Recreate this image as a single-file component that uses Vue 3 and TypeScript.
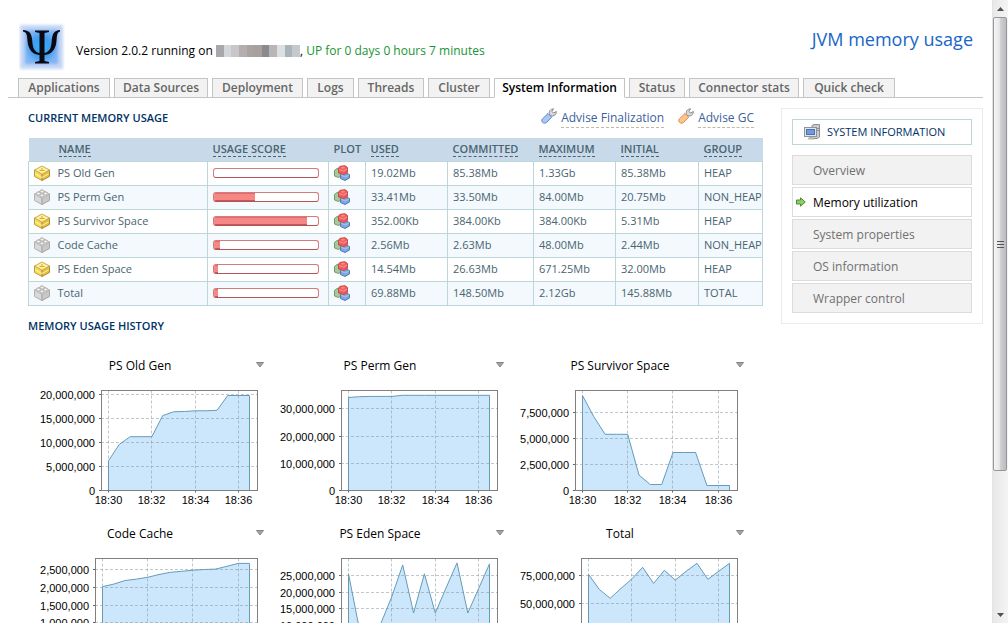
<script setup lang="ts">
interface Pool {
  name: string
  gold: boolean
  score: number
  used: string
  committed: string
  maximum: string
  initial: string
  group: string
}

interface Chart {
  title: string
  left: number
  unit: number
  unitHeight: number
  ticks: number[]
  values: number[]
}

const tabs = [
  'Applications',
  'Data Sources',
  'Deployment',
  'Logs',
  'Threads',
  'Cluster',
  'System Information',
  'Status',
  'Connector stats',
  'Quick check',
]
const activeTab = 'System Information'

const menu = ['Overview', 'Memory utilization', 'System properties', 'OS information', 'Wrapper control']
const activeItem = 'Memory utilization'

const mosaic = ['#a9a7aa', '#d3d7db', '#c8c6c8', '#b5aeae', '#aaa4a0', '#a7a09d', '#8b8a8c', '#b9b5b6', '#dddfe2', '#aab4bb', '#c5c8cc']

const columns = ['Used', 'Committed', 'Maximum', 'Initial', 'Group']

const pools: Pool[] = [
  { name: 'PS Old Gen', gold: true, score: 0, used: '19.02Mb', committed: '85.38Mb', maximum: '1.33Gb', initial: '85.38Mb', group: 'HEAP' },
  { name: 'PS Perm Gen', gold: false, score: 39, used: '33.41Mb', committed: '33.50Mb', maximum: '84.00Mb', initial: '20.75Mb', group: 'NON_HEAP' },
  { name: 'PS Survivor Space', gold: true, score: 89, used: '352.00Kb', committed: '384.00Kb', maximum: '384.00Kb', initial: '5.31Mb', group: 'HEAP' },
  { name: 'Code Cache', gold: false, score: 6, used: '2.56Mb', committed: '2.63Mb', maximum: '48.00Mb', initial: '2.44Mb', group: 'NON_HEAP' },
  { name: 'PS Eden Space', gold: true, score: 4, used: '14.54Mb', committed: '26.63Mb', maximum: '671.25Mb', initial: '32.00Mb', group: 'HEAP' },
  { name: 'Total', gold: false, score: 4, used: '69.88Mb', committed: '148.50Mb', maximum: '2.12Gb', initial: '145.88Mb', group: 'TOTAL' },
]

// Values are in millions of bytes, one sample every 30 seconds.
const charts: Chart[] = [
  { title: 'PS Old Gen', left: 73, unit: 5, unitHeight: 24, ticks: [0, 5, 10, 15, 20], values: [6.2, 9.6, 11.2, 11.2, 11.2, 15.6, 16.4, 16.45, 16.6, 16.6, 16.7, 19.8, 19.8, 19.8] },
  { title: 'PS Perm Gen', left: 73, unit: 10, unitHeight: 27.2, ticks: [0, 10, 20, 30], values: [34.2, 34.5, 34.6, 34.6, 34.6, 35, 35, 35, 35, 35, 35, 35, 35, 35] },
  { title: 'PS Survivor Space', left: 67, unit: 2.5, unitHeight: 26, ticks: [0, 2.5, 5, 7.5], values: [9.13, 7.1, 5.4, 5.4, 5.4, 1.48, 0.58, 0.58, 3.65, 3.65, 3.65, 0.48, 0.48, 0.48] },
  { title: 'Code Cache', left: 67, unit: 0.5, unitHeight: 17.8, ticks: [0, 0.5, 1, 1.5, 2, 2.5], values: [2.02, 2.09, 2.19, 2.23, 2.28, 2.36, 2.42, 2.45, 2.48, 2.5, 2.51, 2.59, 2.67, 2.67] },
  { title: 'PS Eden Space', left: 73, unit: 5, unitHeight: 16.6, ticks: [0, 5, 10, 15, 20, 25], values: [25.5, 9, 2.5, 10.7, 18.7, 28.2, 13.7, 25.5, 13.7, 21.3, 28.8, 13.7, 21.1, 28.5] },
  { title: 'Total', left: 73, unit: 25, unitHeight: 27.7, ticks: [0, 25, 50, 75], values: [76, 62.4, 54.3, 63.3, 71.8, 82.3, 67.8, 79.6, 70.8, 78.7, 85.9, 71.5, 78.7, 85.9] },
]

const plotTop = 6.5
const plotBottom = 106.5
const plotRight = 229.5
const lastX = 221.5

function xOf(c: Chart, i: number): number {
  const first = c.left + 7.5
  return first + ((lastX - first) * i) / 13
}

function snapX(c: Chart, i: number): number {
  return Math.floor(xOf(c, i)) + 0.5
}

function yOf(c: Chart, v: number): number {
  return plotBottom - (v / c.unit) * c.unitHeight
}

function snapY(c: Chart, v: number): number {
  return Math.floor(yOf(c, v)) + 0.5
}

function area(c: Chart): string {
  const points = c.values.map((v, i) => `${xOf(c, i).toFixed(1)},${yOf(c, v).toFixed(1)}`).join(' L')
  return `M${xOf(c, 0)},${plotBottom} L${points} L${lastX},${plotBottom} Z`
}

function label(v: number): string {
  return Math.round(v * 1000000).toLocaleString('en-US')
}

const times = [
  { index: 0, text: '18:30' },
  { index: 4, text: '18:32' },
  { index: 8, text: '18:34' },
  { index: 12, text: '18:36' },
]
</script>

<template>
  <div class="window">
    <div class="page">
      <header class="masthead">
        <a class="logo" href="#" aria-label="Home">
          <svg width="46" height="48" viewBox="0 0 46 48" aria-hidden="true">
            <defs>
              <radialGradient id="logoGlow">
                <stop offset="0" stop-color="#2fb4ff" />
                <stop offset="0.6" stop-color="#3f9df2" />
                <stop offset="1" stop-color="#7fb4f4" />
              </radialGradient>
              <filter id="logoSoft" x="-20%" y="-20%" width="140%" height="140%">
                <feGaussianBlur stdDeviation="1.5" />
              </filter>
            </defs>
            <rect x="1" y="2" width="43" height="44" fill="#c3d6f6" filter="url(#logoSoft)" />
            <rect x="6" y="7" width="33" height="34" fill="url(#logoGlow)" filter="url(#logoSoft)" />
            <path
              d="M16 7.500H30V9L25.500 10V30C31 29 32.300 24 32.700 18 33.200 11 35 7.500 41 7V8.500C38 9.500 38 12 37.500 18 36.800 26 33 31.500 25.500 32V38L30 39V40.500H16V39L20.500 38V32C13 31.500 9.200 26 8.500 18 8 12 8 9.500 4 8.500V7C11 7.500 12.800 11 13.300 18 13.700 24 15 29 20.500 30V10L16 9Z"
              fill="#0a0a10"
            />
          </svg>
        </a>
        <p class="version">
          Version 2.0.2 running on
          <span class="mosaic" aria-hidden="true"><i v-for="(c, i) in mosaic" :key="i" :style="{ background: c }"></i></span>,
          <span class="up">UP for 0 days 0 hours 7 minutes</span>
        </p>
        <h1>JVM memory usage</h1>
      </header>

      <nav class="tabs" aria-label="Main">
        <a v-for="t in tabs" :key="t" href="#" :class="{ active: t === activeTab }">{{ t }}</a>
      </nav>

      <div class="body">
        <main class="content">
          <div class="section-head">
            <h2>Current memory usage</h2>
            <div class="actions">
              <a href="#" class="action">
                <svg width="16" height="16" viewBox="0 0 16 16" aria-hidden="true">
                  <path d="M8.500 6.500C7.500 3.500 9.500 1 12.500.8L11 3.500 12.500 5 15.300 3.500C15.600 6.500 13 8.500 10 7.800Z" fill="#d8dade" stroke="#85888f" />
                  <path d="M7 5.500 10.700 9.200 5.500 14.500C2.500 16.500-.5 13.500 1.300 11Z" fill="#a9c8f2" stroke="#6487c5" />
                </svg>
                <span>Advise Finalization</span>
              </a>
              <a href="#" class="action">
                <svg width="16" height="16" viewBox="0 0 16 16" aria-hidden="true">
                  <path d="M8.500 6.500C7.500 3.500 9.500 1 12.500.8L11 3.500 12.500 5 15.300 3.500C15.600 6.500 13 8.500 10 7.800Z" fill="#d8dade" stroke="#85888f" />
                  <path d="M7 5.500 10.700 9.200 5.500 14.500C2.500 16.500-.5 13.500 1.300 11Z" fill="#ffc38c" stroke="#d98a4e" />
                </svg>
                <span>Advise GC</span>
              </a>
            </div>
          </div>

          <table class="usage">
            <colgroup>
              <col class="c-icon" /><col class="c-name" /><col class="c-score" /><col class="c-plot" /><col class="c-used" />
              <col class="c-mid" /><col class="c-max" /><col class="c-init" /><col class="c-group" />
            </colgroup>
            <thead>
              <tr>
                <th></th>
                <th><a href="#">Name</a></th>
                <th><a href="#">Usage score</a></th>
                <th>Plot</th>
                <th v-for="c in columns" :key="c"><a href="#">{{ c }}</a></th>
              </tr>
            </thead>
            <tbody>
              <tr v-for="p in pools" :key="p.name">
                <td class="icon-cell">
                  <svg class="brick" :class="{ gold: p.gold }" width="16" height="16" viewBox="0 0 16 16" aria-hidden="true">
                    <path class="left" d="M.5 5 8 9V15.500L.5 11.500Z" />
                    <path class="right" d="M15.500 5 8 9V15.500L15.500 11.500Z" />
                    <path class="top" d="M.5 5 8 1 15.500 5 8 9.200Z" />
                    <g v-if="p.gold" class="bolt">
                      <path d="M5.500 5.500H10.500M8 3V5.500" />
                      <path class="shine" d="M1.500 9 8 12.500 14.500 9" />
                    </g>
                    <g v-else class="studs">
                      <ellipse cx="8" cy="2.500" rx="2" ry="1.600" />
                      <ellipse cx="4.500" cy="4.500" rx="2" ry="1.600" />
                      <ellipse cx="11.500" cy="4.500" rx="2" ry="1.600" />
                      <ellipse cx="8" cy="6.500" rx="2" ry="1.600" />
                    </g>
                  </svg>
                </td>
                <td class="name-cell">{{ p.name }}</td>
                <td class="score-cell">
                  <div class="score" role="meter" aria-valuemin="0" aria-valuemax="100" :aria-valuenow="p.score" :aria-label="p.name">
                    <div v-if="p.score" class="score-fill" :style="{ width: p.score + '%' }"></div>
                  </div>
                </td>
                <td>
                  <a href="#" :aria-label="'Plot ' + p.name">
                    <svg width="16" height="16" viewBox="0 0 16 16" aria-hidden="true">
                      <path d="M.5 5.500 3 3.500 7 5V11L4.500 12.500.5 11Z" fill="#a4c99c" stroke="#6a9c68" />
                      <path d="M6.500 9.500 11 7.500 15.500 9.500V13L11 15.500 6.500 13.500Z" fill="#7fa6d8" stroke="#4f7ab5" />
                      <path d="M7 10 11 12 15 10" fill="none" stroke="#a8c6e8" />
                      <path d="M4.500 3 6 1.300 11 .7 13.500 2.500V7.500L10 9.500 4.500 8Z" fill="#ee5c5c" stroke="#cc4a4e" />
                      <path d="M5 4.500 9.500 6 13 4" fill="none" stroke="#ff9a94" />
                      <ellipse cx="9" cy="2.800" rx="2" ry="1" fill="#ff8a84" />
                    </svg>
                  </a>
                </td>
                <td>{{ p.used }}</td>
                <td>{{ p.committed }}</td>
                <td>{{ p.maximum }}</td>
                <td>{{ p.initial }}</td>
                <td>{{ p.group }}</td>
              </tr>
            </tbody>
          </table>

          <h2 class="history-title">Memory usage history</h2>

          <div class="charts">
            <section v-for="c in charts" :key="c.title" class="chart">
              <div class="chart-head">
                <h3>{{ c.title }}</h3>
                <button type="button" :aria-label="c.title + ' options'">
                  <svg width="8" height="6" viewBox="0 0 8 6" aria-hidden="true"><path d="M.5.5H7.500L4 5Z" fill="#a4a4a4" stroke="#858585" /></svg>
                </button>
              </div>
              <svg class="plot" width="240" height="124" viewBox="0 0 240 124" role="img" :aria-label="c.title">
                <path class="area" :d="area(c)" />
                <g class="grid">
                  <line v-for="t in times" :key="t.text" :x1="snapX(c, t.index)" :x2="snapX(c, t.index)" :y1="plotTop" :y2="plotBottom" />
                  <line v-for="v in c.ticks.slice(1)" :key="v" :x1="c.left" :x2="plotRight" :y1="snapY(c, v)" :y2="snapY(c, v)" />
                </g>
                <rect class="frame" :x="c.left + 0.5" :y="plotTop" :width="plotRight - c.left - 0.5" :height="plotBottom - plotTop" />
                <g class="marks">
                  <line v-for="t in times" :key="t.text" :x1="snapX(c, t.index)" :x2="snapX(c, t.index)" :y1="plotBottom" :y2="plotBottom + 2" />
                  <line v-for="v in c.ticks" :key="v" :x1="c.left - 2" :x2="c.left" :y1="snapY(c, v)" :y2="snapY(c, v)" />
                </g>
                <text v-for="v in c.ticks" :key="v" class="y-label" :x="c.left - 6" :y="snapY(c, v) + 4">{{ label(v) }}</text>
                <text v-for="t in times" :key="t.text" class="x-label" :x="snapX(c, t.index)" y="120">{{ t.text }}</text>
              </svg>
            </section>
          </div>
        </main>

        <aside class="side">
          <h2 class="side-title">
            <svg width="16" height="16" viewBox="0 0 16 16" aria-hidden="true">
              <path d="M8 1.500 10 .5H15.500V13L13 14.500H8Z" fill="#c9cccc" stroke="#8b9090" />
              <path d="M12.500 4.500H15M12.500 6.500H15" stroke="#8b9090" />
              <rect x=".5" y="3.500" width="12" height="9" fill="#e2e5e8" stroke="#8d969e" />
              <rect x="2.500" y="5.500" width="8" height="5" fill="#6f9ae0" stroke="#4a72b8" />
              <path d="M5 13H9L10.500 15.500H3.500Z" fill="#b9b9a4" />
            </svg>
            System information
          </h2>
          <nav class="menu" aria-label="System information">
            <a v-for="m in menu" :key="m" href="#" :class="{ active: m === activeItem }">
              <svg v-if="m === activeItem" width="10" height="10" viewBox="0 0 10 10" aria-hidden="true">
                <path d="M.5 3H4.500V.8L9.300 5 4.500 9.200V7H.5Z" fill="#8fce5c" stroke="#4d8b38" />
              </svg>
              <span>{{ m }}</span>
            </a>
          </nav>
        </aside>
      </div>
    </div>

    <div class="scrollbar" aria-hidden="true">
      <div class="arrow"><svg width="7" height="4" viewBox="0 0 7 4"><path d="M0 4 3.500 0 7 4Z" fill="#505050" /></svg></div>
      <div class="thumb"><i></i><i></i><i></i></div>
      <div class="track"></div>
      <div class="arrow"><svg width="7" height="4" viewBox="0 0 7 4"><path d="M0 0 3.500 4 7 0Z" fill="#505050" /></svg></div>
    </div>
  </div>
</template>

<style>
body {
  background: #fff;
}
</style>

<style scoped>
* {
  box-sizing: border-box;
}
.window {
  display: flex;
  height: 100vh;
  overflow: hidden;
  font-family: "Trebuchet MS", "Open Sans", "Noto Sans", sans-serif;
  font-size: 11px;
  color: #4a6470;
}
.page {
  flex: 1;
  min-width: 0;
  padding: 0 9px 0 8px;
  overflow: hidden;
}
h1, h2, h3, p {
  margin: 0;
  font-weight: 400;
}
a {
  color: inherit;
  text-decoration: none;
}
.masthead {
  display: flex;
  align-items: flex-start;
  height: 78px;
  padding: 23px 10px 0 11px;
}
.logo {
  display: block;
  height: 48px;
}
.logo svg {
  display: block;
}
.version {
  flex: 1;
  padding: 19px 0 0 11px;
  font-size: 12px;
  line-height: 18px;
  color: #000;
  white-space: nowrap;
}
.up {
  color: #199432;
}
.mosaic {
  display: inline-flex;
  width: 84px;
  height: 12px;
  vertical-align: -2px;
}
.mosaic i {
  flex: 1;
}
h1 {
  font-size: 18px;
  line-height: 32px;
  color: #1766c8;
}
.tabs {
  display: grid;
  grid-template-columns: 92px 94px 91px 47px 66px 62px 131px 56px 110px 92px;
  gap: 4px;
  height: 20px;
  padding-left: 10px;
  border-bottom: 1px solid #c4c4c4;
}
.tabs a {
  height: 20px;
  border: 1px solid #c4c4c4;
  background: #f2f2f2;
  font-size: 12px;
  font-weight: 600;
  line-height: 18px;
  text-align: center;
  color: #666;
  white-space: nowrap;
}
.tabs a.active {
  border-bottom-color: #fff;
  background: #fff;
  color: #000;
}
.body {
  display: flex;
  align-items: flex-start;
  gap: 18px;
  padding: 10px 0 0 20px;
}
.content {
  flex: 1;
  min-width: 0;
}
.section-head {
  display: flex;
  justify-content: space-between;
  height: 30px;
}
h2 {
  font-size: 11px;
  font-weight: 600;
  line-height: 20px;
  color: #003366;
  text-transform: uppercase;
}
.actions {
  display: flex;
  gap: 14px;
  padding-right: 9px;
}
.action {
  display: flex;
  gap: 4px;
  font-size: 12px;
  line-height: 19px;
  color: #3c5f9b;
}
.action span {
  height: 20px;
  border-bottom: 1px dashed #c3b9a0;
}
.usage {
  width: 100%;
  table-layout: fixed;
  border-collapse: collapse;
}
.c-icon { width: 25px; }
.c-name { width: 154px; }
.c-score { width: 121px; }
.c-plot { width: 37px; }
.c-used { width: 82px; }
.c-mid { width: 86px; }
.c-max { width: 82px; }
.c-init { width: 83px; }
.usage th {
  height: 23px;
  padding: 0 5px;
  background: #c8daea;
  font-weight: 600;
  line-height: 16px;
  text-align: left;
  text-transform: uppercase;
  white-space: nowrap;
}
.usage th a {
  border-bottom: 1px dashed #4a6470;
}
.usage td {
  height: 24px;
  padding: 0 5px;
  border: 1px solid #bcd6da;
  line-height: 16px;
  white-space: nowrap;
}
.usage tbody tr:nth-child(even) {
  background: #f3f9fd;
}
.usage .icon-cell {
  border-right: 0;
}
.usage .name-cell {
  border-left: 0;
  padding-left: 4px;
}
.usage .score-cell {
  padding-right: 9px;
}
.usage td svg {
  display: block;
}
.brick .left { fill: #d9d9d9; stroke: #b0b0b0; }
.brick .right { fill: #c8c8c8; stroke: #a6a6a6; }
.brick .top { fill: #ececec; stroke: #b8b8b8; }
.brick .studs { fill: #f0f0f0; stroke: #b0b0b0; }
.brick.gold .left { fill: #f6dc58; stroke: #bd9a44; }
.brick.gold .right { fill: #e6c23c; stroke: #ae8c3c; }
.brick.gold .top { fill: #fbf0a0; stroke: #c9ac52; }
.bolt path { fill: none; stroke: #e0a93c; }
.bolt .shine { stroke: #fff2a8; }
.score {
  height: 10px;
  overflow: hidden;
  border: 1px solid #d47c7c;
  border-bottom-color: #b55353;
  border-radius: 3px;
  background: #fff;
}
.score-fill {
  height: 100%;
  border-top: 1px solid #e06a6a;
  border-bottom: 1px solid #c95555;
  background: #f58787;
}
.history-title {
  margin-top: 10px;
}
.charts {
  display: grid;
  grid-template-columns: repeat(3, 240px);
  padding-top: 20px;
}
.chart {
  height: 168px;
}
.chart-head {
  display: flex;
  align-items: flex-start;
  height: 28px;
}
h3 {
  flex: 1;
  font-size: 12px;
  line-height: 20px;
  text-align: center;
  color: #000;
}
.chart-head button {
  display: flex;
  justify-content: center;
  width: 16px;
  padding: 6px 0;
  border: 0;
  background: none;
}
.plot {
  display: block;
}
.area {
  fill: #cce7fb;
  stroke: #649cba;
}
.grid line {
  stroke: #7d8f9c;
  stroke-opacity: 0.5;
  stroke-dasharray: 3 2;
}
.frame {
  fill: none;
  stroke: #808080;
}
.marks line {
  stroke: #666;
}
.plot text {
  font-family: "Liberation Sans", Arial, sans-serif;
  font-size: 11px;
  fill: #000;
}
.y-label {
  text-anchor: end;
}
.x-label {
  text-anchor: middle;
}
.side {
  width: 202px;
  padding: 10px;
  border: 1px solid #ebebeb;
}
.side-title {
  display: flex;
  align-items: center;
  gap: 7px;
  height: 26px;
  margin-bottom: 10px;
  padding-left: 11px;
  border: 1px solid #bcd6da;
  font-weight: 400;
}
.menu {
  display: grid;
  gap: 2px;
}
.menu a {
  display: flex;
  align-items: center;
  height: 30px;
  padding-left: 20px;
  border: 1px solid #dcdcdc;
  background: #f2f2f2;
  font-size: 12px;
  color: #707070;
}
.menu a.active {
  gap: 7px;
  padding-left: 3px;
  background: #fff;
  color: #000;
}
.scrollbar {
  display: flex;
  flex-direction: column;
  width: 16px;
  border-left: 1px solid #e3e3e3;
  background: linear-gradient(90deg, #e8e8e8, #f4f4f4);
}
.arrow {
  display: flex;
  align-items: center;
  justify-content: center;
  height: 17px;
}
.thumb {
  display: flex;
  flex: 10;
  flex-direction: column;
  align-items: center;
  justify-content: center;
  gap: 1px;
  margin-right: 1px;
  border: 1px solid #979797;
  border-radius: 2px;
  background: linear-gradient(90deg, #f5f5f5, #e6e6e8 45%, #cfcfd2 55%, #bcbcc0);
}
.thumb i {
  width: 7px;
  height: 2px;
  border-bottom: 1px solid #555;
}
.track {
  flex: 3;
}
</style>
